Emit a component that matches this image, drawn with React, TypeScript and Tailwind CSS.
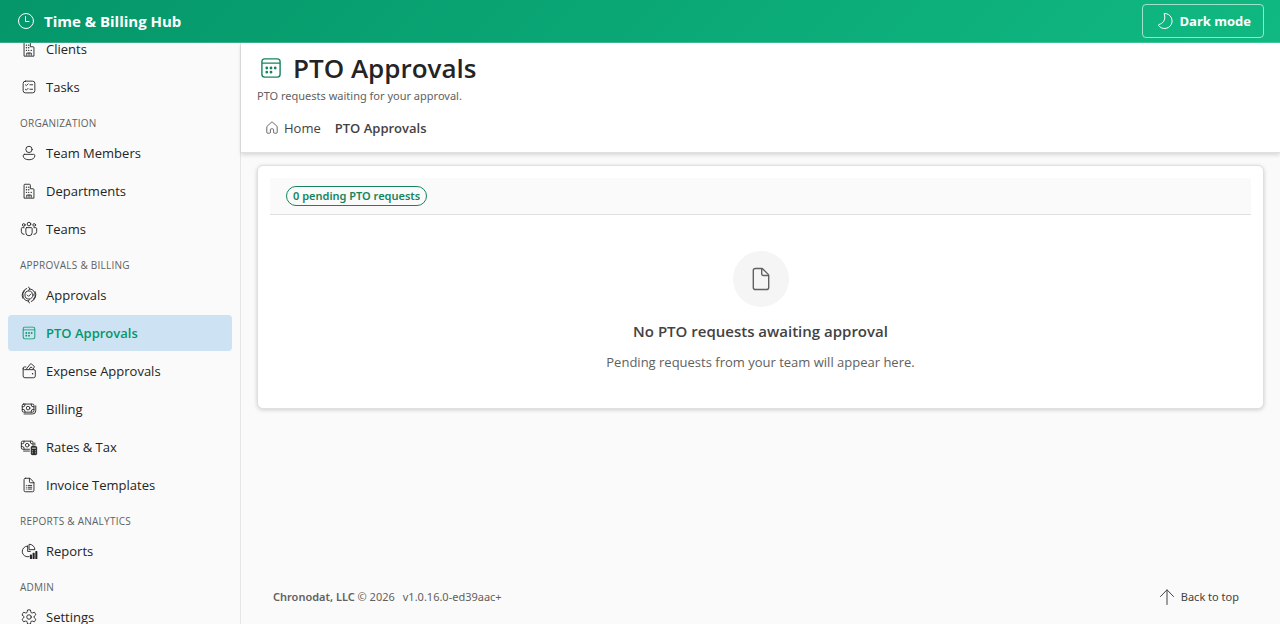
import React from 'react';
import type { ReactNode } from 'react';

interface IconProps {
  className?: string;
  children?: ReactNode;
}

// Base for the outline icons, all drawn on a 20x20 grid
function Icon({ className = 'size-[18px]', children }: IconProps) {
  return (
    <svg
      viewBox="0 0 20 20"
      fill="none"
      stroke="currentColor"
      strokeLinecap="round"
      strokeLinejoin="round"
      aria-hidden="true"
      className={`shrink-0 ${className}`}
    >
      {children}
    </svg>
  );
}

const ClockIcon = (props: IconProps) => (
  <Icon {...props}>
    <circle cx="10" cy="10" r="7.5" />
    <path d="M9.5 5.5v5h3.5" />
  </Icon>
);

const MoonIcon = (props: IconProps) => (
  <Icon {...props}>
    <path d="M9.4 3a.5.5 0 0 1 .6-.5 7.500 7.500 0 1 1-6.500 11.900.5.5 0 0 1 .2-.7C6 12.800 7.500 12 8.600 10.400 10 8.300 10.100 6 9.400 3z" />
  </Icon>
);

const BuildingIcon = () => (
  <Icon>
    <path d="M4.500 17.500v-14a1 1 0 0 1 1-1h5a1 1 0 0 1 1 1v4h3a1 1 0 0 1 1 1v9z" />
    <path d="M7.500 17v-2.500h5V17M10 14.500V17" />
    <g fill="currentColor" stroke="none">
      <circle cx="7.200" cy="5.700" r=".8" />
      <circle cx="9.700" cy="5.700" r=".8" />
      <circle cx="7.200" cy="8.600" r=".8" />
      <circle cx="9.700" cy="8.600" r=".8" />
      <circle cx="7.200" cy="11.500" r=".8" />
      <circle cx="9.700" cy="11.500" r=".8" />
      <circle cx="12.500" cy="11.500" r=".8" />
    </g>
  </Icon>
);

const TasksIcon = () => (
  <Icon>
    <rect x="3.500" y="3.500" width="13" height="13" rx="2.500" />
    <path d="M6 7.500l1 1 2-2M6 12.500l1 1 2-2M11 7.500h3M11 12.500h3" />
  </Icon>
);

const PersonIcon = () => (
  <Icon>
    <circle cx="10" cy="6" r="3.500" />
    <path d="M5 11.500h10a1.500 1.500 0 0 1 1.500 1.500c0 3-3 4.500-6.500 4.500S3.500 16 3.500 13A1.500 1.500 0 0 1 5 11.500z" />
  </Icon>
);

const TeamIcon = () => (
  <Icon>
    <circle cx="10" cy="4.500" r="2" />
    <circle cx="4.200" cy="5.500" r="1.500" />
    <circle cx="15.800" cy="5.500" r="1.500" />
    <path d="M7.500 8.500h5a1 1 0 0 1 1 1V14a3.500 3.500 0 0 1-7 0V9.500a1 1 0 0 1 1-1z" />
    <path d="M4.500 8.500h-2a1 1 0 0 0-1 1V13a3 3 0 0 0 3 3M15.500 8.500h2a1 1 0 0 1 1 1V13a3 3 0 0 1-3 3" />
  </Icon>
);

const ApprovalsIcon = () => (
  <Icon>
    <circle cx="10" cy="10" r="4.500" />
    <path d="M8 10l1.500 1.500L12.300 8.700" />
    <path d="M9.500 17A7 7 0 0 1 5 5.200M10.500 3A7 7 0 0 1 15 14.800" />
    <path d="M3.200 13.800A7.800 7.800 0 0 1 7.500 2.700M16.800 6.200a7.800 7.800 0 0 1-4.300 11.100" />
    <path d="M9.300 1.200L11.200 3 9.300 4.800M10.700 15.200L8.800 17l1.900 1.800" />
  </Icon>
);

const CalendarIcon = (props: IconProps) => (
  <Icon {...props}>
    <path
      fill="currentColor"
      stroke="none"
      d="M7 11a1 1 0 1 0 0-2 1 1 0 0 0 0 2zm1 2a1 1 0 1 1-2 0 1 1 0 0 1 2 0zm2-2a1 1 0 1 0 0-2 1 1 0 0 0 0 2zm1 2a1 1 0 1 1-2 0 1 1 0 0 1 2 0zm2-2a1 1 0 1 0 0-2 1 1 0 0 0 0 2zm4-5.500A2.500 2.500 0 0 0 14.500 3h-9A2.500 2.500 0 0 0 3 5.500v9A2.500 2.500 0 0 0 5.500 17h9a2.500 2.500 0 0 0 2.500-2.500v-9zM4 7h12v7.500c0 .83-.67 1.500-1.500 1.500h-9A1.500 1.500 0 0 1 4 14.500V7zm1.500-3h9c.83 0 1.500.67 1.500 1.500V6H4v-.5C4 4.670 4.670 4 5.500 4z"
    />
  </Icon>
);

const WalletIcon = () => (
  <Icon>
    <path d="M3.500 7v8.500a2 2 0 0 0 2 2h9.500a2 2 0 0 0 2-2V10a1.500 1.500 0 0 0-1.500-1.500H5A1.500 1.500 0 0 1 3.500 7 1.500 1.500 0 0 1 5 5.500h1.500" />
    <path d="M7 8l4.300-5.600a1 1 0 0 1 1.400-.2L15.500 4.500a1 1 0 0 1 .2 1.400L14.500 8M10.500 7.500l1.500-2 1.500 1" />
    <circle cx="14" cy="13" r=".8" fill="currentColor" stroke="none" />
  </Icon>
);

const MoneyIcon = () => (
  <Icon>
    <rect x="2.500" y="4.500" width="13" height="9" rx="1.500" />
    <circle cx="9" cy="9" r="2" />
    <path d="M2.500 7.500h1a2 2 0 0 0 2-2v-1M15.500 7.500h-1a2 2 0 0 1-2-2v-1M2.500 10.500h1a2 2 0 0 1 2 2v1M15.500 10.500h-1a2 2 0 0 0-2 2v1" />
    <path d="M4.500 15.500h9.500a3.500 3.500 0 0 0 3.500-3.500V6.500" />
  </Icon>
);

const RatesIcon = () => (
  <Icon>
    <path d="M10.500 12.500H3A1.500 1.500 0 0 1 1.500 11V5A1.500 1.500 0 0 1 3 3.500h10A1.500 1.500 0 0 1 14.500 5v3.500M16.500 5.500V8M4 14.500h6.500" />
    <circle cx="8" cy="8" r="2" />
    <path d="M1.500 6.500h1a2 2 0 0 0 2-2v-1M14.500 6.500h-1a2 2 0 0 1-2-2v-1M1.500 9.500h1a2 2 0 0 1 2 2v1" />
    <rect x="12.500" y="9.500" width="6" height="9" rx="1" fill="currentColor" />
    <path d="M13.800 11.300h3.400M14 14.200h.1M17 14.200h.1M14 16.500h.1M17 16.500h.1" stroke="#fafafa" />
  </Icon>
);

const DocumentIcon = ({ className, children }: IconProps) => (
  <Icon className={className}>
    <path d="M6 2.500h4.600a1 1 0 0 1 .7.300l3.900 3.900a1 1 0 0 1 .3.700V16a1.500 1.500 0 0 1-1.500 1.500H6A1.500 1.500 0 0 1 4.500 16V4A1.500 1.500 0 0 1 6 2.500z" />
    <path d="M10.500 2.700v3.800a1 1 0 0 0 1 1h3.800" />
    {children}
  </Icon>
);

const InvoiceIcon = () => (
  <DocumentIcon>
    <path d="M7 10.500h.1M9 10.500h4M7 12.500h.1M9 12.500h4M7 14.500h.1M9 14.500h4" />
  </DocumentIcon>
);

const ReportsIcon = () => (
  <Icon>
    <path d="M10.500 2.500a6 6 0 0 1 6 6h-6z" />
    <path d="M8.500 4.500a6 6 0 1 0 1.500 11.800M8.500 4.500v6h3" />
    <g fill="currentColor" stroke="none">
      <rect x="11" y="14" width="2.300" height="5" rx=".7" />
      <rect x="14" y="12" width="2.300" height="7" rx=".7" />
      <rect x="17" y="10" width="2.300" height="9" rx=".7" />
    </g>
  </Icon>
);

const SettingsIcon = () => (
  <Icon>
    <circle cx="10" cy="10" r="2.500" />
    <path d="M2.400 7.500A8 8 0 0 1 4 4.700l2 .7a1.500 1.500 0 0 0 2-1.200l.4-2a8 8 0 0 1 3.200 0l.4 2a1.500 1.500 0 0 0 2 1.200l2-.7a8 8 0 0 1 1.600 2.800L16 8.900a1.500 1.500 0 0 0 0 2.200l1.600 1.400a8 8 0 0 1-1.600 2.800l-2-.7a1.500 1.500 0 0 0-2 1.200l-.4 2a8 8 0 0 1-3.200 0l-.4-2a1.500 1.500 0 0 0-2-1.200l-2 .7a8 8 0 0 1-1.600-2.800L4 11.100a1.500 1.500 0 0 0 0-2.200z" />
  </Icon>
);

const HomeIcon = (props: IconProps) => (
  <Icon {...props}>
    <path d="M9.300 2.800a1 1 0 0 1 1.400 0l5.400 4.900c.3.200.4.500.4.800v7a1 1 0 0 1-1 1H13a1 1 0 0 1-1-1V12a1 1 0 0 0-1-1H9a1 1 0 0 0-1 1v3.500a1 1 0 0 1-1 1H4.500a1 1 0 0 1-1-1v-7c0-.3.100-.6.400-.8z" />
  </Icon>
);

const ArrowUpIcon = (props: IconProps) => (
  <Icon {...props}>
    <path d="M3.500 9.500L10 2.800l6.500 6.700M10 3v14.500" />
  </Icon>
);

interface NavItem {
  label: string;
  icon: (props: IconProps) => ReactNode;
  active?: boolean;
}

interface NavSection {
  title?: string;
  items: NavItem[];
}

const sections: NavSection[] = [
  {
    items: [
      { label: 'Clients', icon: BuildingIcon },
      { label: 'Tasks', icon: TasksIcon },
    ],
  },
  {
    title: 'ORGANIZATION',
    items: [
      { label: 'Team Members', icon: PersonIcon },
      { label: 'Departments', icon: BuildingIcon },
      { label: 'Teams', icon: TeamIcon },
    ],
  },
  {
    title: 'APPROVALS & BILLING',
    items: [
      { label: 'Approvals', icon: ApprovalsIcon },
      { label: 'PTO Approvals', icon: CalendarIcon, active: true },
      { label: 'Expense Approvals', icon: WalletIcon },
      { label: 'Billing', icon: MoneyIcon },
      { label: 'Rates & Tax', icon: RatesIcon },
      { label: 'Invoice Templates', icon: InvoiceIcon },
    ],
  },
  {
    title: 'REPORTS & ANALYTICS',
    items: [{ label: 'Reports', icon: ReportsIcon }],
  },
  {
    title: 'ADMIN',
    items: [{ label: 'Settings', icon: SettingsIcon }],
  },
];

function Sidebar() {
  return (
    <aside className="w-[241px] shrink-0 overflow-hidden border-r border-[#e5e5e5]">
      <nav aria-label="Main" className="-mt-3 flex flex-col gap-0.5 px-2">
        {sections.map((section, index) => (
          <React.Fragment key={index}>
            {section.title && (
              <h2 className="px-3 pt-2 pb-0.5 text-[10px] leading-4 tracking-wide text-[#616161]">
                {section.title}
              </h2>
            )}
            {section.items.map(({ label, icon: ItemIcon, active }) => (
              <a
                key={label}
                href="#"
                aria-current={active ? 'page' : undefined}
                className={`flex h-9 items-center gap-2 rounded px-3 ${
                  active ? 'bg-[#cde2f3] font-semibold text-[#059669]' : 'text-[#242424]'
                }`}
              >
                <ItemIcon />
                {label}
              </a>
            ))}
          </React.Fragment>
        ))}
      </nav>
    </aside>
  );
}

export default function App() {
  return (
    <div className="flex h-screen flex-col overflow-hidden bg-[#fafafa] font-['Open_Sans','Noto_Sans',sans-serif] text-[13px] leading-5 text-[#242424]">
      <header className="z-10 flex shrink-0 items-center justify-between border-b border-white/20 bg-linear-135 from-[#059669] to-[#10b981] px-4 py-1 text-white">
        <div className="flex items-center gap-2">
          <ClockIcon className="size-5" />
          <span className="text-[15px] font-bold">Time &amp; Billing Hub</span>
        </div>
        <button
          type="button"
          className="flex h-[34px] items-center gap-1 rounded border border-white/60 px-3 font-bold"
        >
          <MoonIcon className="size-5" />
          Dark mode
        </button>
      </header>

      <div className="flex min-h-0 flex-1">
        <Sidebar />

        <main className="flex min-w-0 flex-1 flex-col">
          {/* Page header */}
          <div className="border-b border-[#e0e0e0] bg-white px-4 pt-[7px] pb-2 shadow-[0_2px_4px_rgba(0,0,0,0.14)]">
            <div className="flex h-9 items-center gap-2">
              <CalendarIcon className="size-7 text-[#15845f]" />
              <h1 className="text-[26px] leading-9 font-semibold">PTO Approvals</h1>
            </div>
            <p className="mt-0.5 font-['Noto_Sans',sans-serif] text-[11px] leading-4 text-[#616161]">
              PTO requests waiting for your approval.
            </p>
            <nav aria-label="Breadcrumb" className="mt-2 flex h-8 items-center gap-3.5 px-[7px]">
              <a href="#" className="flex items-center gap-1 text-[#424242]">
                <HomeIcon className="size-4" />
                Home
              </a>
              <span aria-current="page" className="font-semibold text-[#424242]">
                PTO Approvals
              </span>
            </nav>
          </div>

          {/* Pending requests */}
          <section className="mx-4 mt-3 rounded-md border border-[#e0e0e0] bg-white p-3 shadow-[0_1px_4px_rgba(0,0,0,0.18)]">
            <div className="flex border-b border-[#e0e0e0] bg-[#fafafa] px-4 py-2">
              <span className="flex h-5 items-center rounded-full border border-[#15845f] px-1.5 font-['Noto_Sans',sans-serif] text-[11px] font-semibold text-[#15845f]">
                0 pending PTO requests
              </span>
            </div>
            <div className="flex flex-col items-center pt-9 pb-6 text-center">
              <div className="flex size-14 items-center justify-center rounded-full bg-[#f5f5f5] text-[#616161]">
                <DocumentIcon className="size-7" />
              </div>
              <h2 className="mt-3 text-[15px] leading-6 font-semibold text-[#424242]">
                No PTO requests awaiting approval
              </h2>
              <p className="mt-[9px] text-[#616161]">Pending requests from your team will appear here.</p>
            </div>
          </section>

          <footer className="mx-4 mt-auto mb-[11px] flex items-center justify-between px-4 font-['Noto_Sans',sans-serif] text-[11px] text-[#616161]">
            <p className="flex gap-2">
              <span>
                <strong className="font-semibold">Chronodat, LLC</strong> © 2026
              </span>
              <span>v1.0.16.0-ed39aac+</span>
            </p>
            <button type="button" className="flex h-8 items-center gap-1 px-[9px] text-[#424242]">
              <ArrowUpIcon className="size-5" />
              Back to top
            </button>
          </footer>
        </main>
      </div>
    </div>
  );
}
